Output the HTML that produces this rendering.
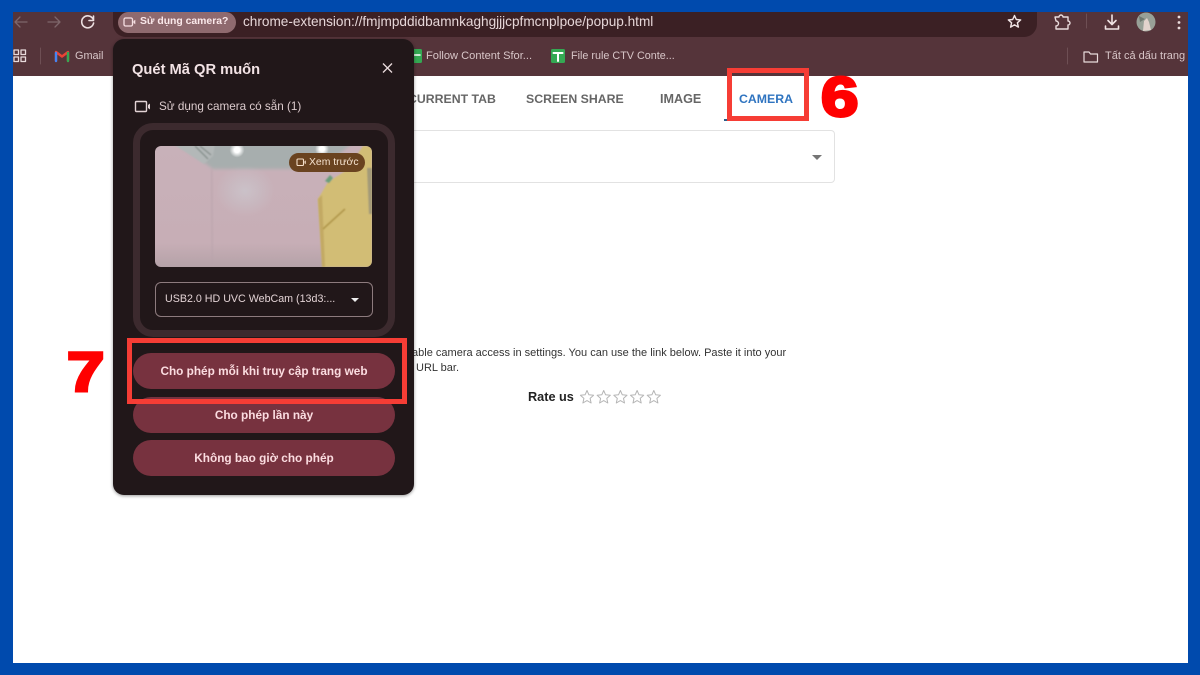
<!DOCTYPE html>
<html><head><meta charset="utf-8"><style>
*{box-sizing:border-box}
html,body{margin:0;padding:0;width:1200px;height:675px;overflow:hidden;background:#004aad;font-family:"Liberation Sans","Noto Sans CJK JP",sans-serif}
.a{position:absolute;white-space:nowrap}
.btn{position:absolute;left:133px;width:262px;height:36px;border-radius:18px;background:#77323f;color:#fbdce0;font-size:11.8px;font-weight:bold;text-align:center;line-height:37px}
.bm{font-size:10.9px;color:#d8c6c8;top:50px}
.tab{top:92px;font-size:12.3px;font-weight:bold;color:#666}
.num{font-size:56px;line-height:76px;font-weight:bold;color:#f00;-webkit-text-stroke:3px #f00;transform:scaleX(1.2);transform-origin:0 0}
svg{position:absolute;overflow:visible}
</style></head><body>
<div class="a" style="left:13px;top:12px;width:1175px;height:651px;background:#fff"></div>
<div class="a" style="left:13px;top:12px;width:1175px;height:64px;background:#55343a"></div>
<div class="a" style="left:113px;top:12px;width:924px;height:25px;background:#3b2024;border-radius:0 0 13px 13px"></div>
<div class="a" style="left:118px;top:12px;width:118px;height:21px;background:#8f6a6f;border-radius:11px"></div>

<svg style="left:0;top:0" width="1200" height="80" fill="none" stroke-linecap="round" stroke-linejoin="round">
<path d="M27 22H15M20 17l-5 5 5 5" stroke="#7e666a" stroke-width="1.300"/>
<path d="M48 22H60M55 17l5 5-5 5" stroke="#7e666a" stroke-width="1.300"/>
<path d="M93 19a6 6 0 1 0 .6 4M93.500 16v4.500h-4.500" stroke="#ecdfe0" stroke-width="1.600"/>
<rect x="124" y="18" width="8.500" height="8" rx="1.500" stroke="#f6dfe2" stroke-width="1.300"/><path d="M133.500 21l1.800-1.300v4.600l-1.800-1.300z" fill="#f6dfe2"/>
<path d="M1014.500 15.500l1.800 4 4.400.4-3.300 2.900 1 4.300-3.900-2.300-3.900 2.300 1-4.300-3.300-2.900 4.400-.4z" stroke="#f2e6e7" stroke-width="1.400"/>
<path d="M1056 16h4a2 2 0 0 1 4 0h5v4a2 2 0 0 1 0 4v4h-12v-3a2 2 0 0 0 0-5z" transform="translate(-1 1)" stroke="#eadcdd" stroke-width="1.400"/>
<path d="M1086.500 14v14" stroke="#6e4f54"/>
<path d="M1112 15v9M1108 20.500l4 4 4-4M1105.500 26v3h13v-3" stroke="#f0e3e4" stroke-width="1.600"/>
<circle cx="1146" cy="22" r="9.500" fill="#98a097" stroke="none"/><path d="M1143 31l1-10 3-3 2 4 2 8z" fill="#e3d3cd" stroke="none"/><path d="M1139 16l6 3-5 3z" fill="#6f7870" stroke="none"/>
<circle cx="1179" cy="17" r="1.400" fill="#eadcdd"/><circle cx="1179" cy="22.500" r="1.400" fill="#eadcdd"/><circle cx="1179" cy="28" r="1.400" fill="#eadcdd"/>
<rect x="14" y="50" width="4.500" height="4.500" stroke="#e8dadb" stroke-width="1.300"/><rect x="21" y="50" width="4.500" height="4.500" stroke="#e8dadb" stroke-width="1.300"/><rect x="14" y="57" width="4.500" height="4.500" stroke="#e8dadb" stroke-width="1.300"/><rect x="21" y="57" width="4.500" height="4.500" stroke="#e8dadb" stroke-width="1.300"/>
<path d="M40.500 48v16M1067.500 48v16" stroke="#6e4f54"/>
<path d="M56 61V52l6 4.500 6-4.500v9" stroke="#ea4335" stroke-width="2.400"/>
<path d="M56 61V53" stroke="#4285f4" stroke-width="2.400"/><path d="M68 61V53" stroke="#34a853" stroke-width="2.400"/>
<rect x="410" y="49" width="12" height="14" rx="1.500" fill="#34a853"/>
<path d="M412 55h8" stroke="#fff" stroke-width="1.500"/>
<rect x="551" y="49" width="14" height="14" rx="1.500" fill="#34a853"/>
<path d="M553.500 53h9M558 53v8" stroke="#fff" stroke-width="2"/>
<path d="M1084 52h5l1.500 2h7v8h-13.500z" stroke="#e8dadb" stroke-width="1.200"/>
</svg>

<div class="a" style="left:140px;top:16px;font-size:10.4px;font-weight:bold;color:#fbe9eb">Sử dụng camera?</div>
<div class="a" style="left:243px;top:14px;font-size:13.6px;color:#e6d6d8">chrome-extension://fmjmpddidbamnkaghgjjjcpfmcnplpoe/popup.html</div>
<div class="a bm" style="left:75px">Gmail</div>
<div class="a bm" style="left:426px;font-size:11.1px">Follow Content Sfor...</div>
<div class="a bm" style="left:571px;font-size:10.8px">File rule CTV Conte...</div>
<div class="a bm" style="left:1105px;font-size:11px">Tất cả dấu trang</div>

<!-- page content -->
<div class="a tab" style="left:408px">CURRENT TAB</div>
<div class="a tab" style="left:526px">SCREEN SHARE</div>
<div class="a tab" style="left:660px;font-size:12.600px">IMAGE</div>
<div class="a tab" style="left:739px;color:#2f74c0">CAMERA</div>
<div class="a" style="left:724px;top:119px;width:60px;height:2px;background:#2b5f8c"></div>
<div class="a" style="left:400px;top:130px;width:435px;height:53px;border:1px solid #e2e2e2;border-radius:4px"></div>
<div class="a" style="left:812px;top:155px;width:0;height:0;border-left:5px solid transparent;border-right:5px solid transparent;border-top:5px solid #757575"></div>
<div class="a" style="left:412px;top:347px;font-size:11.03px;color:#333">able camera access in settings. You can use the link below. Paste it into your</div>
<div class="a" style="left:416px;top:362px;font-size:11px;color:#333">URL bar.</div>
<div class="a" style="left:528px;top:390px;font-size:12.700px;font-weight:bold;color:#222">Rate us</div>
<svg style="left:0;top:0" width="700" height="420" fill="none" stroke="#b5b5b5" stroke-width="1" stroke-linejoin="round">
<path d="M587 390.500l1.900 4.300 4.700.5-3.500 3.100 1 4.600-4.100-2.400-4.100 2.400 1-4.600-3.500-3.100 4.700-.5z"/>
<path transform="translate(16.700 0)" d="M587 390.500l1.900 4.300 4.700.5-3.500 3.100 1 4.600-4.100-2.400-4.100 2.400 1-4.600-3.500-3.100 4.700-.5z"/>
<path transform="translate(33.400 0)" d="M587 390.500l1.900 4.300 4.700.5-3.500 3.100 1 4.600-4.100-2.400-4.100 2.400 1-4.600-3.500-3.100 4.700-.5z"/>
<path transform="translate(50.100 0)" d="M587 390.500l1.900 4.300 4.700.5-3.500 3.100 1 4.600-4.100-2.400-4.100 2.400 1-4.600-3.500-3.100 4.700-.5z"/>
<path transform="translate(66.800 0)" d="M587 390.500l1.900 4.300 4.700.5-3.500 3.100 1 4.600-4.100-2.400-4.100 2.400 1-4.600-3.500-3.100 4.700-.5z"/>
</svg>

<!-- popup -->
<div class="a" style="left:113px;top:39px;width:301px;height:456px;background:#211719;border-radius:11px;box-shadow:0 1px 3px rgba(0,0,0,.4)"></div>
<div class="a" style="left:132px;top:62px;font-size:14.700px;font-weight:bold;color:#f3e3e5">Quét Mã QR muốn</div>
<svg style="left:0;top:0" width="420" height="130" fill="none"><path d="M383 63.500l9 9M392 63.500l-9 9" stroke="#eadcdd" stroke-width="1.300"/>
<rect x="135.500" y="101.500" width="11" height="10" rx="1" stroke="#e3d3d5" stroke-width="1.400"/><path d="M148 105l2-1.500v6l-2-1.500z" fill="#e3d3d5"/></svg>
<div class="a" style="left:159px;top:100px;font-size:11.700px;color:#dccbcd">Sử dụng camera có sẵn (1)</div>
<div class="a" style="left:133px;top:123px;width:262px;height:214px;background:#211719;border:7px solid #3c2a2e;border-radius:20px"></div>

<svg style="left:155px;top:146px" width="217" height="121" viewBox="0 0 217 121">
<defs><clipPath id="c"><rect width="217" height="121" rx="6"/></clipPath>
<linearGradient id="v" x1="0" x2="0" y1="0" y2="1"><stop offset="0" stop-color="#c8b1b9"/><stop offset=".8" stop-color="#c7aeb6"/><stop offset="1" stop-color="#b5a2a8"/></linearGradient>
<radialGradient id="l"><stop offset=".35" stop-color="#fff"/><stop offset="1" stop-color="#fff" stop-opacity="0"/></radialGradient>
<radialGradient id="w"><stop offset="0" stop-color="#ccd0d6" stop-opacity=".55"/><stop offset="1" stop-color="#ccd0d6" stop-opacity="0"/></radialGradient>
<filter id="b"><feGaussianBlur stdDeviation=".8"/></filter><filter id="bb"><feGaussianBlur stdDeviation="1.500"/></filter></defs>
<g clip-path="url(#c)">
<rect width="217" height="121" fill="url(#v)"/>
<path d="M20 -5L58 23H166L200 -5Z" fill="#a7aeae" filter="url(#bb)"/>
<ellipse cx="90" cy="45" rx="30" ry="26" fill="url(#w)"/>
<path d="M56 23L58 121" stroke="#b8a2aa" stroke-width="1.500" filter="url(#bb)"/>
<path d="M18 -2h42l-2 12-9 8z" fill="#b3b8b8" filter="url(#b)"/>
<path d="M40 0l13 13M45 0l11 9" stroke="#7d8683" stroke-width="1.100" filter="url(#b)"/>
<path d="M168 121l-5-68 10-17 19-12 16-24h9v121z" fill="#d2bd74" filter="url(#b)"/>
<path d="M212 22h5v46h-3z" fill="#a39a78" filter="url(#b)"/>
<path d="M167 121l-4-68 4-4 3 72z" fill="#c2a963" filter="url(#b)"/>
<path d="M168 83l22-20" stroke="#ab9144" stroke-width="1.500" filter="url(#b)"/>
<path d="M170 35l5-6 3 3-4 5z" fill="#6a9e7a" filter="url(#b)"/>
<circle cx="82" cy="4" r="7.500" fill="url(#l)"/><circle cx="167" cy="3" r="7" fill="url(#l)"/>
</g></svg>

<div class="a" style="left:289px;top:153px;width:76px;height:19px;border-radius:10px;background:#6a4320"></div>
<svg style="left:0;top:0" width="420" height="200" fill="none"><rect x="297" y="159" width="6.500" height="6.500" rx="1" stroke="#f5dfc9" stroke-width="1.100"/><path d="M304.500 161.300l1.300-.9v3.700l-1.300-.9z" fill="#f5dfc9"/></svg>
<div class="a" style="left:309px;top:157px;font-size:10.400px;color:#f5e2cf">Xem trước</div>

<div class="a" style="left:155px;top:282px;width:218px;height:35px;border:1px solid #8d7b7e;border-radius:6px"></div>
<div class="a" style="left:165px;top:293px;font-size:10.700px;color:#e2d2d4">USB2.0 HD UVC WebCam (13d3:...</div>
<div class="a" style="left:351px;top:298px;width:0;height:0;border-left:4px solid transparent;border-right:4px solid transparent;border-top:4px solid #eee"></div>

<div class="btn" style="top:353px">Cho phép mỗi khi truy cập trang web</div>
<div class="btn" style="top:397px">Cho phép lần này</div>
<div class="btn" style="top:440px">Không bao giờ cho phép</div>

<!-- annotations -->
<div class="a" style="left:127px;top:338px;width:280px;height:66px;border:5px solid #f63d35"></div>
<div class="a" style="left:727px;top:68px;width:82px;height:53px;border:5px solid #f63d35"></div>
<div class="a num" style="left:821px;top:59px">6</div>
<div class="a num" style="left:67px;top:334px">7</div>
</body></html>
